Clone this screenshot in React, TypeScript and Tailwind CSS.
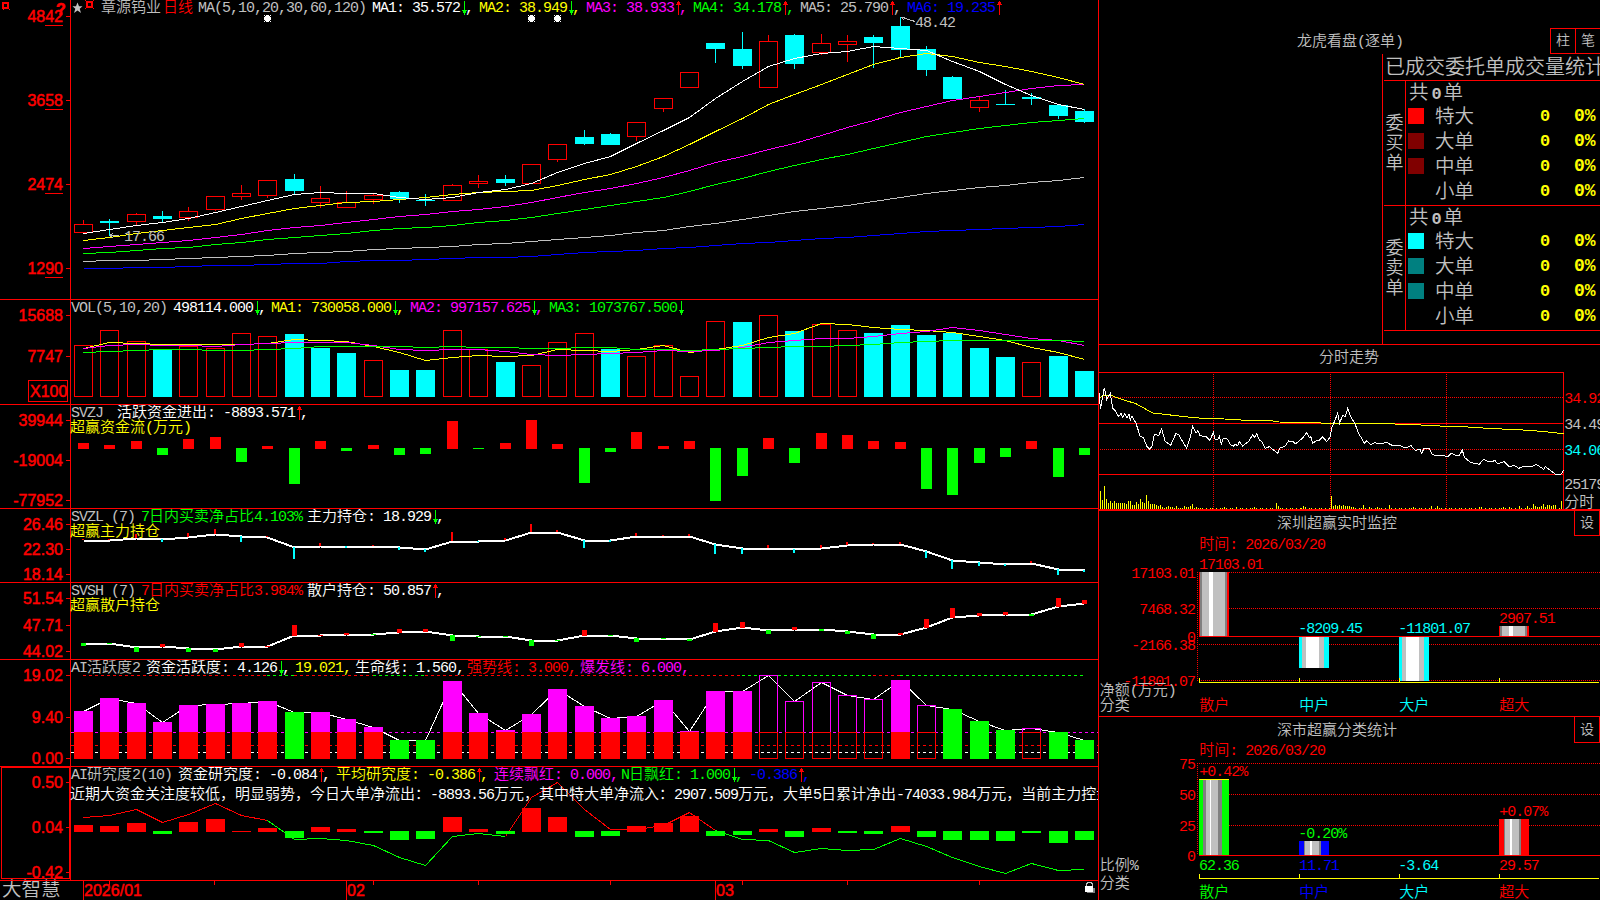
import type { ReactNode } from "react";

type Segment = {
  text: string;
  color: string;
  width?: string;
  arrow?: "up" | "down";
  tail?: string;
};

type AxisLabel = { text: string; y: number };

type PanelProps = {
  top: number;
  height: number;
  className: string;
  labels: AxisLabel[];
  header: Segment[];
  subtitle?: ReactNode;
  children: ReactNode;
};

const RED = "#ff0000";
const GREEN = "#00ff00";
const CYAN = "#00ffff";
const MAGENTA = "#ff00ff";
const YELLOW = "#ffff00";
const BLUE = "#0000ff";
const SILVER = "#c0c0c0";
const GRAY = "#808080";
const WHITE = "#ffffff";

const centerX = (i: number) => Math.round(83 + i * 26.345);

// color, high, body top, body bottom, low
const candles: [string, number, number, number, number][] = [
  ["r", 220, 224, 233, 233], ["c", 219, 221, 223, 236], ["r", 213, 214, 222, 225], ["c", 211, 216, 219, 222],
  ["r", 207, 211, 218, 221], ["r", 196, 196, 210, 211], ["r", 185, 193, 197, 200], ["r", 180, 180, 196, 198],
  ["c", 174, 179, 191, 194], ["r", 186, 198, 203, 208], ["r", 191, 202, 208, 208], ["r", 194, 195, 200, 204],
  ["c", 191, 192, 199, 203], ["c", 194, 200, 201, 206], ["r", 184, 185, 201, 201], ["r", 175, 181, 184, 188],
  ["c", 175, 179, 183, 186], ["r", 164, 164, 184, 184], ["r", 144, 144, 160, 162], ["c", 130, 137, 144, 145],
  ["c", 133, 134, 145, 145], ["r", 122, 122, 137, 141], ["r", 98, 98, 109, 112], ["r", 72, 72, 88, 88],
  ["c", 43, 43, 49, 63], ["c", 32, 49, 66, 69], ["r", 35, 41, 88, 88], ["c", 34, 35, 64, 69],
  ["r", 34, 43, 53, 55], ["r", 35, 41, 45, 62], ["c", 35, 37, 43, 68], ["c", 17, 26, 50, 57],
  ["c", 46, 49, 70, 76], ["c", 76, 77, 99, 99], ["r", 97, 100, 108, 112], ["c", 90, 104, 105, 105],
  ["c", 93, 97, 99, 105], ["c", 104, 105, 116, 119], ["c", 109, 111, 122, 123]
];

const priceLines = [
  { color: BLUE, ys: [268, 268, 267, 267, 266, 265, 265, 264, 263, 263, 261, 260, 260, 259, 258, 257, 257, 256, 254, 252, 251, 250, 248, 247, 245, 243, 242, 240, 238, 237, 235, 233, 231, 230, 229, 228, 227, 226, 224] },
  { color: SILVER, ys: [261, 260, 260, 259, 258, 257, 256, 255, 253, 252, 251, 249, 248, 247, 246, 244, 243, 241, 239, 237, 235, 232, 230, 226, 223, 219, 215, 211, 208, 205, 201, 197, 193, 190, 187, 185, 182, 180, 177] },
  { color: GREEN, ys: [253, 252, 250, 248, 247, 244, 242, 239, 237, 235, 233, 230, 228, 227, 225, 222, 220, 217, 213, 209, 205, 201, 197, 191, 184, 178, 171, 165, 159, 154, 148, 142, 136, 132, 128, 125, 122, 120, 118] },
  { color: MAGENTA, ys: [248, 246, 244, 242, 240, 237, 234, 230, 227, 225, 222, 219, 216, 214, 211, 209, 206, 202, 197, 192, 188, 183, 177, 170, 162, 156, 149, 143, 135, 127, 120, 112, 106, 100, 96, 92, 88, 85, 84] },
  { color: YELLOW, ys: [240, 237, 233, 230, 227, 224, 218, 213, 208, 205, 202, 201, 199, 197, 194, 192, 191, 190, 185, 179, 174, 166, 156, 144, 131, 118, 104, 94, 84, 74, 64, 57, 53, 56, 62, 66, 71, 77, 84] },
  { color: WHITE, ys: [233, 229, 225, 222, 218, 212, 206, 200, 194, 192, 193, 193, 197, 199, 197, 192, 189, 183, 172, 163, 156, 143, 130, 117, 98, 81, 66, 58, 53, 51, 46, 48, 50, 61, 71, 84, 95, 104, 109] }
];

const volumeTops = [345, 330, 341, 350, 346, 348, 333, 336, 334, 348, 353, 360, 370, 370, 330, 349, 362, 365, 342, 333, 349, 356, 345, 376, 321, 322, 315, 331, 324, 330, 333, 325, 335, 333, 348, 357, 362, 356, 371];
const volumeKinds = "rrrcrrrrcccrccrrcrrrcrrrrcrcrrccccccrcc";

const volumeLines = [
  { color: YELLOW, ys: [348, 342, 343, 344, 344, 344, 344, 343, 339, 340, 341, 346, 352, 360, 357, 355, 356, 355, 349, 350, 351, 349, 345, 352, 349, 345, 337, 333, 323, 324, 327, 329, 330, 332, 336, 340, 347, 352, 359] },
  { color: MAGENTA, ys: [348, 345, 344, 345, 345, 346, 344, 343, 342, 342, 342, 345, 349, 350, 349, 349, 351, 354, 355, 354, 353, 352, 350, 351, 350, 347, 342, 340, 338, 338, 336, 333, 331, 327, 330, 334, 338, 340, 345] },
  { color: GREEN, ys: [352, 351, 350, 349, 349, 350, 350, 349, 348, 346, 346, 346, 346, 347, 346, 347, 347, 348, 348, 347, 347, 349, 349, 350, 349, 348, 347, 346, 346, 345, 344, 342, 341, 340, 340, 340, 340, 340, 341] }
];

const flows = [6, 4, 8, -7, 10, 12, -14, 3, -36, 8, -3, 4, -7, -6, 28, -1, 6, 29, 5, -35, -4, 17, 3, 8, -53, -28, 11, -15, 16, 14, 8, 7, -41, -47, -15, -9, 8, -29, -7];

const mainLine = [540, 540, 538, 539, 537, 534, 536, 537, 547, 546, 546, 546, 547, 549, 541, 541, 540, 532, 532, 540, 540, 536, 536, 536, 544, 548, 548, 549, 548, 545, 544, 544, 551, 560, 562, 564, 563, 569, 570];
const mainTicks = [1, 1, 4, -3, 4, 5, -6, 1, -12, 3, -2, 1, -3, -3, 9, -1, 2, 8, 2, -8, -2, 3, 1, 2, -10, -6, 3, -4, 3, 3, 1, 2, -7, -9, -4, -2, 2, -6, -2];

const retailLine = [643, 643, 647, 646, 648, 649, 646, 646, 635, 635, 634, 634, 632, 631, 635, 636, 636, 640, 640, 635, 635, 638, 638, 639, 631, 627, 630, 629, 629, 631, 634, 634, 627, 617, 615, 614, 614, 606, 603];
const retailTicks = [-3, -1, -5, 3, -4, -3, 4, 1, 11, 1, 2, -1, 4, 3, -6, -1, -1, -6, -1, 6, -1, -4, -1, -2, 9, 6, -4, 3, -2, -3, -5, 2, 9, 10, 3, 3, -2, 9, 4];

// s = stacked, g = green, h = hollow
const activeTops = [711, 698, 703, 722, 705, 704, 703, 701, 712, 712, 719, 727, 740, 740, 681, 713, 730, 714, 689, 706, 718, 716, 700, 731, 691, 691, 675, 701, 682, 695, 699, 680, 705, 709, 721, 730, 728, 732, 740];
const activeKinds = "ssssssssgsssggsssssssssssshhhhhshggghgg";

const researchBars = [7, 6, 9, -3, 10, 13, 1, 4, -7, 5, 3, -2, -9, -8, 15, 3, -3, 24, 15, -6, -5, 6, 9, 16, -5, -4, 3, -6, 4, -2, -3, 6, -6, -9, -9, -10, -2, -12, -9];
const researchLine = [817, 815, 809, 822, 814, 803, 815, 820, 839, 838, 840, 845, 857, 865, 836, 833, 836, 797, 782, 809, 829, 829, 825, 812, 830, 839, 840, 852, 848, 850, 849, 838, 846, 857, 866, 873, 863, 870, 869];

const toPoints = (ys: number[], from = 0, to = ys.length - 1) =>
  ys
    .slice(from, to + 1)
    .map((y, i) => `${centerX(from + i) + 0.5},${y + 0.5}`)
    .join(" ");

function splitRuns(text: string) {
  return text.match(/[\x20-\x7e]+|[^\x20-\x7e]+/g) ?? [];
}

function Mixed({ text }: { text: string }) {
  return (
    <>
      {splitRuns(text).map((run, i) => (
        <span key={i} className={run.charCodeAt(0) < 127 ? "tracking-[-1px]" : ""}>
          {run}
        </span>
      ))}
    </>
  );
}

function Arrow({ dir }: { dir: "up" | "down" }) {
  return (
    <svg className="w-[7px] shrink-0" height="15" viewBox="0 0 7 15" shapeRendering="crispEdges">
      {dir === "up" ? (
        <path d="M3 0h1v14H3zM2 1h3v2H2zM1 3h5v1H1z" fill={RED} />
      ) : (
        <path d="M3 0h1v14H3zM1 9h5v1H1zM2 10h3v2H2z" fill={GREEN} />
      )}
    </svg>
  );
}

function HeaderRow({ items }: { items: Segment[] }) {
  return (
    <div className="flex h-4 items-center whitespace-pre pl-[71px] leading-4">
      {items.map((item, i) => (
        <div key={i} className={`flex shrink-0 items-center ${item.width ?? ""} ${item.color}`}>
          <span>
            <Mixed text={item.text} />
          </span>
          {item.arrow ? (
            <span className="-mt-[2px] ml-px">
              <Arrow dir={item.arrow} />
            </span>
          ) : null}
          {item.tail ? <span className="-ml-[3px] tracking-[-1px]">{item.tail}</span> : null}
        </div>
      ))}
    </div>
  );
}

function Panel({ top, height, className, labels, header, subtitle, children }: PanelProps) {
  return (
    <section className={`relative shrink-0 overflow-hidden border-b border-[#ff0000] ${className}`}>
      <svg
        className="absolute inset-0"
        width="1098"
        height={height}
        viewBox={`0 ${top} 1098 ${height}`}
        shapeRendering="crispEdges"
      >
        <rect x="70" y={top} width="1" height={height} fill={RED} />
        {labels.map((label) => (
          <g key={label.text} fill={RED}>
            <text x="63" y={label.y + 6} textAnchor="end" fontSize="16" fontFamily="Liberation Sans, sans-serif" stroke={RED} strokeWidth="0.5">
              {label.text}
            </text>
            <rect x="66" y={label.y} width="4" height="1" />
          </g>
        ))}
        {children}
      </svg>
      <div className="relative pt-px">
        <HeaderRow items={header} />
        {subtitle}
      </div>
    </section>
  );
}

function Lines({ lines }: { lines: { color: string; ys: number[] }[] }) {
  return (
    <>
      {lines.map((line) => (
        <polyline key={line.color} points={toPoints(line.ys)} fill="none" stroke={line.color} />
      ))}
    </>
  );
}

function SunMark({ x, y, color }: { x: number; y: number; color: string }) {
  return (
    <path
      d={`M${x - 2} ${y - 2}h5v5h-5zM${x - 3} ${y - 3}h1v1h-1zM${x + 3} ${y - 3}h1v1h-1zM${x - 3} ${y + 3}h1v1h-1zM${x + 3} ${y + 3}h1v1h-1zM${x - 3} ${y - 1}h7v3h-7zM${x - 1} ${y - 3}h3v7h-3z`}
      fill={color}
    />
  );
}

function PricePanel() {
  const labels = [
    { text: "4842", y: 16 },
    { text: "3658", y: 100 },
    { text: "2474", y: 184 },
    { text: "1290", y: 268 }
  ];
  return (
    <Panel
      top={0}
      height={299}
      className="h-[300px]"
      labels={labels}
      header={[
        { text: "", color: "", width: "w-[30px]" },
        { text: "章源钨业", color: "text-[#c0c0c0]", width: "w-[62px]" },
        { text: "日线", color: "text-[#ff0000]", width: "w-[35px]" },
        { text: "MA(5,10,20,30,60,120)", color: "text-[#c0c0c0]", width: "w-[174px]" },
        { text: "MA1: 35.572", color: "text-white", width: "w-[107px]", arrow: "down", tail: "," },
        { text: "MA2: 38.949", color: "text-[#ffff00]", width: "w-[107px]", arrow: "down", tail: "," },
        { text: "MA3: 38.933", color: "text-[#ff00ff]", width: "w-[107px]", arrow: "up", tail: "," },
        { text: "MA4: 34.178", color: "text-[#00ff00]", width: "w-[107px]", arrow: "up", tail: "," },
        { text: "MA5: 25.790", color: "text-[#c0c0c0]", width: "w-[107px]", arrow: "up", tail: "," },
        { text: "MA6: 19.235", color: "text-[#0000ff]", arrow: "up" }
      ]}
    >
      {labels.map((label) => (
        <rect key={label.text} x="45" y={label.y + 9} width="18" height="1" fill={RED} />
      ))}
      <path d="M2 2h7v7H2zM4 4v3h3V4zM9 9h1v1H9zM3 9h1v1H3z" fill={RED} fillRule="evenodd" />
      <text x="56" y="15" fontSize="16" fontWeight="900" fontFamily="Liberation Sans, sans-serif" fill={RED} stroke={RED} strokeWidth="0.6">
        ?
      </text>
      <path
        d="M77.500 2.500 79 6.300H82.500L79.700 8.800 81 13 77.500 10.600 74 13 75.300 8.800 72.500 6.300H76Z"
        fill={SILVER}
        shapeRendering="geometricPrecision"
      />
      <path d="M86 1h7v7h-7zM88 3v3h3V3zM85 0h1v1h-1zM93 0h1v1h-1zM85 8h1v1h-1zM93 8h1v1h-1z" fill={RED} fillRule="evenodd" />
      {[7, 17, 18].map((i) => (
        <SunMark key={i} x={centerX(i)} y={18} color={WHITE} />
      ))}
      {candles.map(([kind, high, bodyTop, bodyBottom, low], i) => {
        const x = centerX(i);
        if (kind === "c") {
          return (
            <g key={i} fill={CYAN}>
              <rect x={x} y={high} width="1" height={low - high} />
              <rect x={x - 9} y={bodyTop} width="19" height={bodyBottom - bodyTop} />
            </g>
          );
        }
        return (
          <g key={i}>
            <rect x={x} y={high} width="1" height={bodyTop - high} fill={RED} />
            <rect x={x} y={bodyBottom} width="1" height={low - bodyBottom} fill={RED} />
            <rect x={x - 8.5} y={bodyTop + 0.5} width="18" height={Math.max(bodyBottom - bodyTop - 1, 1)} fill="none" stroke={RED} />
          </g>
        );
      })}
      <Lines lines={priceLines} />
      <path d="M110 235.500h9M110 235.500l3-2.500M110 235.500l3 2.500M901 17l14 4.500M901 17l3 3M901 17h4" stroke={SILVER} fill="none" />
      <text x="124" y="241" fontSize="15" letterSpacing="-1" fill={SILVER}>17.66</text>
      <text x="915" y="27" fontSize="15" letterSpacing="-1" fill={SILVER}>48.42</text>
    </Panel>
  );
}

function VolumePanel() {
  return (
    <Panel
      top={300}
      height={104}
      className="h-[105px]"
      labels={[{ text: "15688", y: 315 }, { text: "7747", y: 356 }]}
      header={[
        { text: "VOL(5,10,20)", color: "text-[#c0c0c0]", width: "w-[102px]" },
        { text: "498114.000", color: "text-white", width: "w-[98px]", arrow: "down", tail: "," },
        { text: "MA1: 730058.000", color: "text-[#ffff00]", width: "w-[139px]", arrow: "down", tail: "," },
        { text: "MA2: 997157.625", color: "text-[#ff00ff]", width: "w-[139px]", arrow: "down", tail: "," },
        { text: "MA3: 1073767.500", color: "text-[#00ff00]", arrow: "down" }
      ]}
    >
      <rect x="28.500" y="380.500" width="39" height="21" fill="none" stroke={RED} />
      <text x="30" y="397" fontSize="16" fontFamily="Liberation Sans, sans-serif" fill={RED} stroke={RED} strokeWidth="0.5">
        X100
      </text>
      {volumeTops.map((y, i) =>
        volumeKinds[i] === "c" ? (
          <rect key={i} x={centerX(i) - 9} y={y} width="19" height={397 - y} fill={CYAN} />
        ) : (
          <rect key={i} x={centerX(i) - 8.5} y={y + 0.5} width="18" height={396 - y} fill="none" stroke={RED} />
        )
      )}
      <Lines lines={volumeLines} />
    </Panel>
  );
}

function FlowPanel() {
  return (
    <Panel
      top={405}
      height={103}
      className="h-[104px]"
      labels={[{ text: "39944", y: 420 }, { text: "-19004", y: 460 }, { text: "-77952", y: 500 }]}
      header={[
        { text: "SVZJ", color: "text-[#c0c0c0]", width: "w-[46px]" },
        { text: "活跃资金进出: -8893.571", color: "text-white", arrow: "up", tail: "," }
      ]}
      subtitle={<p className="-mt-px pl-[70px] leading-[15px] text-[#ffff00]"><Mixed text="超赢资金流(万元)" /></p>}
    >
      {flows.map((v, i) => (
        <rect
          key={i}
          x={centerX(i) - 5}
          y={v > 0 ? 449 - v : 448}
          width="11"
          height={Math.abs(v)}
          fill={v > 0 ? RED : GREEN}
        />
      ))}
    </Panel>
  );
}

function MainHoldingPanel() {
  return (
    <Panel
      top={509}
      height={73}
      className="h-[74px]"
      labels={[{ text: "26.46", y: 524 }, { text: "22.30", y: 549 }, { text: "18.14", y: 574 }]}
      header={[
        { text: "SVZL (7)", color: "text-[#c0c0c0]", width: "w-[70px]" },
        { text: "7日内买卖净占比4.103%", color: "text-[#00ff00]", width: "w-[166px]" },
        { text: "主力持仓: 18.929", color: "text-white", arrow: "down", tail: "," }
      ]}
      subtitle={<p className="-mt-px pl-[70px] leading-[15px] text-[#ffff00]">超赢主力持仓</p>}
    >
      <polyline points={toPoints(mainLine)} fill="none" stroke={WHITE} strokeWidth="2" />
      {mainTicks.map((v, i) => (
        <rect
          key={i}
          x={centerX(i) - 1}
          y={v > 0 ? mainLine[i] - v : mainLine[i]}
          width="2"
          height={Math.abs(v)}
          fill={v > 0 ? RED : CYAN}
        />
      ))}
    </Panel>
  );
}

function RetailHoldingPanel() {
  return (
    <Panel
      top={583}
      height={76}
      className="h-[77px]"
      labels={[{ text: "51.54", y: 598 }, { text: "47.71", y: 625 }, { text: "44.02", y: 651 }]}
      header={[
        { text: "SVSH (7)", color: "text-[#c0c0c0]", width: "w-[70px]" },
        { text: "7日内买卖净占比3.984%", color: "text-[#ff0000]", width: "w-[166px]" },
        { text: "散户持仓: 50.857", color: "text-white", arrow: "up", tail: "," }
      ]}
      subtitle={<p className="-mt-px pl-[70px] leading-[15px] text-[#ffff00]">超赢散户持仓</p>}
    >
      <polyline points={toPoints(retailLine)} fill="none" stroke={WHITE} strokeWidth="2" />
      {retailTicks.map((v, i) => (
        <rect
          key={i}
          x={centerX(i) - 2}
          y={v > 0 ? retailLine[i] + 1 - v : retailLine[i]}
          width="5"
          height={Math.abs(v)}
          fill={v > 0 ? RED : GREEN}
        />
      ))}
    </Panel>
  );
}

function ActivityPanel() {
  const limits: [number, number, string][] = [
    [0, 7, RED], [7, 8, GREEN], [8, 11, RED], [11, 13, GREEN], [13, 25, RED], [25, 30, GREEN], [30, 31, RED], [31, 38, GREEN]
  ];
  return (
    <Panel
      top={660}
      height={106}
      className="h-[107px]"
      labels={[{ text: "19.02", y: 675 }, { text: "9.40", y: 717 }, { text: "0.00", y: 758 }]}
      header={[
        { text: "AI活跃度2", color: "text-[#c0c0c0]", width: "w-[75px]" },
        { text: "资金活跃度: 4.126", color: "text-white", width: "w-[149px]", arrow: "down", tail: "," },
        { text: "19.021,", color: "text-[#ffff00]", width: "w-[60px]" },
        { text: "生命线: 1.560,", color: "text-white", width: "w-[112px]" },
        { text: "强势线: 3.000,", color: "text-[#ff0000]", width: "w-[113px]" },
        { text: "爆发线: 6.000,", color: "text-[#ff00ff]" }
      ]}
    >
      {limits.map(([from, to, color]) => (
        <path key={from} d={`M${centerX(from)} 675.500H${centerX(to)}`} stroke={color} strokeDasharray="3 3" />
      ))}
      <path d="M71 732.500H1098" stroke={MAGENTA} strokeDasharray="3 3" />
      <path d="M71 745.500H1098" stroke={RED} strokeDasharray="3 3" />
      <path d="M71 752.500H1098" stroke={WHITE} strokeDasharray="3 3" />
      <polyline points={toPoints(activeTops)} fill="none" stroke={WHITE} />
      {activeTops.map((y, i) => {
        const x = centerX(i) - 9;
        const kind = activeKinds[i];
        if (kind === "g") {
          return <rect key={i} x={x} y={y} width="19" height={759 - y} fill={GREEN} />;
        }
        if (kind === "h") {
          return (
            <g key={i} fill="none">
              <rect x={x + 0.5} y={y + 0.5} width="18" height={732 - y} stroke={MAGENTA} />
              <rect x={x + 0.5} y="732.500" width="18" height="26" stroke={RED} />
            </g>
          );
        }
        return (
          <g key={i}>
            <rect x={x} y={y} width="19" height={732 - y} fill={MAGENTA} />
            <rect x={x} y="732" width="19" height="27" fill={RED} />
          </g>
        );
      })}
    </Panel>
  );
}

function ResearchPanel() {
  return (
    <Panel
      top={767}
      height={113}
      className="h-[114px]"
      labels={[{ text: "0.50", y: 782 }, { text: "0.04", y: 827 }, { text: "-0.42", y: 872 }]}
      header={[
        { text: "AI研究度2(10)", color: "text-[#c0c0c0]", width: "w-[107px]" },
        { text: "资金研究度: -0.084", color: "text-white", width: "w-[158px]", arrow: "up", tail: "," },
        { text: "平均研究度: -0.386", color: "text-[#ffff00]", width: "w-[158px]", arrow: "up", tail: "," },
        { text: "连续飘红: 0.000,", color: "text-[#ff00ff]", width: "w-[127px]" },
        { text: "N日飘红: 1.000", color: "text-[#00ff00]", width: "w-[128px]", arrow: "down", tail: "," },
        { text: "-0.386", color: "text-[#0000ff]", arrow: "up", tail: "," }
      ]}
      subtitle={
        <p className="mt-[4px] whitespace-nowrap pl-[70px] leading-4 text-white">
          <Mixed text="近期大资金关注度较低，明显弱势，今日大单净流出：-8893.56万元，其中特大单净流入：2907.509万元，大单5日累计净出-74033.984万元，当前主力控盘" />
        </p>
      }
    >
      <rect x="1.500" y="767.500" width="68" height="111" fill="none" stroke={RED} />
      <polyline points={toPoints(researchLine, 0, 7)} fill="none" stroke={RED} />
      <polyline points={toPoints(researchLine, 7, 16)} fill="none" stroke={GREEN} />
      <polyline points={toPoints(researchLine, 16, 24)} fill="none" stroke={RED} />
      <polyline points={toPoints(researchLine, 24)} fill="none" stroke={GREEN} />
      {researchBars.map((v, i) => (
        <rect
          key={i}
          x={centerX(i) - 9}
          y={v > 0 ? 832 - v : 831}
          width="19"
          height={Math.abs(v)}
          fill={v > 0 ? RED : GREEN}
        />
      ))}
    </Panel>
  );
}

function TimeAxis() {
  return (
    <footer className="flex h-[19px] items-center">
      <span className="w-[70px] pl-[2px] pt-px text-[19.500px] leading-[18px] text-[#c0c0c0]">大智慧</span>
      <svg width="1028" height="19" viewBox="70 881 1028 19" shapeRendering="crispEdges">
        {[83, 346, 715].map((x) => (
          <rect key={x} x={x} y="881" width="1" height="19" fill={RED} />
        ))}
        {[109, 214, 373, 478, 610, 742, 847, 979].map((x) => (
          <rect key={x} x={x} y="881" width="1" height="4" fill={RED} />
        ))}
        <g fontSize="16" fontFamily="Liberation Sans, sans-serif" fill={RED} stroke={RED} strokeWidth="0.5">
          <text x="84" y="896" textLength="58">2026/01</text>
          <text x="347" y="896">02</text>
          <text x="716" y="896">03</text>
        </g>
        <path d="M1086.500 886v-2.500h1v-1h4v1h1v2.500" fill="none" stroke={SILVER} />
        <rect x="1087" y="888" width="8" height="5" fill={GRAY} />
        <rect x="1085" y="886" width="8" height="6" fill={WHITE} />
      </svg>
    </footer>
  );
}

type OrderGroupProps = { side: string[]; swatches: string[]; className: string };

function OrderGroup({ side, swatches, className }: OrderGroupProps) {
  const names = ["特大", "大单", "中单", "小单"];
  return (
    <div className={`ml-px flex border-b border-[#ff0000] ${className}`}>
      <div className="flex w-[22px] flex-col items-center justify-center border-r border-[#ff0000] pt-px text-[18px] leading-5">
        {side.map((char) => (
          <span key={char}>{char}</span>
        ))}
      </div>
      <div className="flex-1 text-[19.500px]">
        <div className="flex h-[23px] items-center pl-[3px] pt-[3px] leading-[21px]">
          共<span className="w-[15px] pl-[3px] text-[17px] font-bold">0</span>单
        </div>
        {names.map((name, i) => (
          <div key={name} className="flex h-[25px] items-center leading-[23px]">
            <span className={`-mt-px ml-[2px] size-4 ${swatches[i]}`} />
            <span className="ml-[11px] w-[104px] pt-[3px]">{name}</span>
            <span className="w-[35px] pl-px text-[17px] font-bold text-[#ffff00]">0</span>
            <span className="text-[18px] font-bold text-[#ffff00]">0%</span>
          </div>
        ))}
      </div>
    </div>
  );
}

function OrderStats() {
  return (
    <section className="relative h-[345px] border-b border-[#ff0000] text-[#c0c0c0]">
      <div className="flex h-[54px] items-start justify-between pt-7">
        <h2 className="ml-[198px] mt-[7px] leading-4">
          <Mixed text="龙虎看盘(逐单)" />
        </h2>
        <div className="flex h-[26px] w-[50px] border-y border-l border-[#ff0000] text-[14px] leading-6">
          <span className="w-[25px] border-r border-[#ff0000] text-center">柱</span>
          <span className="flex-1 text-center">笔</span>
        </div>
      </div>
      <div className="ml-[283px] h-[290px] border-l border-[#ff0000]">
        <h3 className="ml-px h-[27px] whitespace-nowrap border-b border-[#ff0000] pl-px pt-[4px] text-[20px] leading-[22px]">
          已成交委托单成交量统计
        </h3>
        <OrderGroup side={["委", "买", "单"]} swatches={["bg-[#ff0000]", "bg-[#800000]", "bg-[#800000]", ""]} className="h-[125px]" />
        <OrderGroup side={["委", "卖", "单"]} swatches={["bg-[#00ffff]", "bg-[#008080]", "bg-[#008080]", ""]} className="h-[125px]" />
      </div>
    </section>
  );
}

type LabelProps = { x: number; y: number; color: string; children: string; end?: boolean };

// The right-hand charts use a grid of three units per pixel.
function Label({ x, y, color, children, end }: LabelProps) {
  return (
    <text x={x} y={y + 15} fill={color} fontSize="45" textAnchor={end ? "end" : "start"} xmlSpace="preserve">
      {splitRuns(children).map((run, i) => (
        <tspan key={i} letterSpacing={run.charCodeAt(0) < 127 ? -3.1 : 0}>
          {run}
        </tspan>
      ))}
    </text>
  );
}

const avgPoints = "9,160 12,172 22,167 45,166 60,172 100,185 120,191 150,208 172,219 215,224 265,230 320,235 385,237 450,241 525,242 550,246 650,248 700,250 870,251 975,255 1050,259 1115,261 1175,265 1240,268 1300,271 1355,276 1403,281";
const tickPoints = "10,160 13,208 25,143 32,178 43,160 50,205 58,213 68,230 75,220 80,232 86,222 93,233 99,222 103,240 108,228 120,250 133,290 142,292 152,318 162,328 168,318 175,282 188,287 197,266 207,303 224,316 240,280 248,284 260,305 272,325 282,295 290,259 300,280 306,272 312,287 330,290 342,301 352,277 358,300 366,298 370,289 376,312 382,295 394,297 402,313 412,319 418,313 425,317 430,305 440,318 450,310 458,305 470,284 476,292 482,280 490,300 498,305 508,325 520,320 530,328 545,340 552,323 566,320 578,303 590,304 598,312 610,302 620,294 632,278 640,293 645,290 650,310 660,303 670,301 680,290 692,305 702,292 708,262 715,245 725,220 731,249 740,226 748,230 755,206 765,232 775,247 788,280 805,309 812,302 825,314 835,308 850,312 872,307 888,316 910,315 928,324 945,317 958,331 972,328 977,340 984,325 1000,326 1008,343 1025,348 1040,346 1055,351 1066,340 1078,345 1090,347 1099,330 1105,352 1125,368 1150,373 1162,358 1180,366 1197,362 1205,371 1225,365 1240,381 1255,376 1268,385 1280,380 1305,381 1320,373 1333,381 1343,388 1348,380 1360,389 1378,402 1395,403 1403,391";

const openVolumes = [54, 27, 69, 30, 18, 24, 18, 24, 18, 18, 18, 18, 18, 15, 24, 24, 12, 12, 21, 15, 30, 21, 18, 42, 24, 15, 15, 15, 12, 9, 12, 6, 3, 6, 9, 6, 6, 3, 9, 3, 3, 3, 9, 6, 6, 9, 15, 3, 6, 3, 3];
const spikes: Record<number, number> = {
  53: 3, 62: 6, 68: 6, 77: 6, 88: 18, 89: 9, 102: 9, 103: 6, 115: 3, 116: 39, 117: 9, 118: 12, 119: 9, 120: 12, 121: 9, 122: 12,
  123: 9, 124: 9, 125: 9, 126: 6, 127: 6, 132: 12, 135: 6, 139: 6, 145: 12, 157: 6, 166: 9, 169: 9, 190: 6, 191: 6,
  202: 6, 205: 6, 210: 9, 214: 9, 217: 15, 218: 9, 219: 6, 220: 6, 221: 9, 222: 15, 223: 6, 224: 12, 225: 12, 226: 9, 227: 12, 228: 12, 231: 24
};

function IntradayPanel() {
  const volumes = Array.from({ length: 232 }, (_, i) => openVolumes[i] ?? spikes[i] ?? ((i * 7) % 5 < 3 ? 3 : 0));
  return (
    <section className="relative h-[165px]">
      <svg className="absolute inset-0" width="501" height="165" viewBox="9 15 1503 495" shapeRendering="crispEdges">
        <g stroke={RED} strokeWidth="3" fill="none">
          <path d="M9 97.500H1402.500V510M9 250.500H1402M9 403.500H1402" />
          <path d="M9 510H1512" strokeWidth="6" />
          <path d="M12 172.500H1402M12 328.500H1402M352.500 102V506M703.500 102V506M1051.500 102V506" strokeDasharray="3 3" />
        </g>
        {volumes.map((h, i) => (
          <rect key={i} x={Math.min(12 + i * 5.985, 1400)} y={507 - h} width="3" height={h} fill={YELLOW} />
        ))}
        <polyline points={avgPoints} fill="none" stroke={YELLOW} strokeWidth="3" />
        <polyline points={tickPoints} fill="none" stroke={WHITE} strokeWidth="3" />
        <Label x={1405} y={175} color={RED}>34.92</Label>
        <Label x={1405} y={253} color={SILVER}>34.49</Label>
        <Label x={1405} y={331} color={CYAN}>34.06</Label>
        <Label x={1405} y={433} color={SILVER}>25179</Label>
        <Label x={1405} y={486} color={SILVER}>分时</Label>
      </svg>
      <h2 className="relative pl-[220px] pt-[6px] leading-4 text-[#c0c0c0]">分时走势</h2>
    </section>
  );
}

type Stripe = [number, number, string];

function Cylinder({ x, top, bottom, stripes }: { x: number; top: number; bottom: number; stripes: Stripe[] }) {
  return (
    <>
      {stripes.map(([from, to, fill]) => (
        <rect key={from} x={x + from} y={top} width={to - from} height={bottom - top} fill={fill} />
      ))}
    </>
  );
}

const gainStripes: Stripe[] = [[0, 3, RED], [3, 9, GRAY], [9, 30, SILVER], [30, 42, WHITE], [42, 78, SILVER], [78, 84, GRAY], [84, 90, RED]];
const lossStripes: Stripe[] = [[0, 9, CYAN], [9, 21, SILVER], [21, 60, WHITE], [60, 75, SILVER], [75, 90, CYAN]];
const wideStripes: Stripe[] = [[0, 12, GREEN], [12, 21, GRAY], [21, 33, SILVER], [33, 36, WHITE], [36, 57, SILVER], [57, 69, GRAY], [69, 90, GREEN]];
const edgeStripes = (color: string): Stripe[] => [[0, 15, color], [15, 18, GRAY], [18, 33, SILVER], [33, 39, WHITE], [39, 60, SILVER], [60, 66, GRAY], [66, 90, color]];

function TitleBar({ children }: { children: string }) {
  return (
    <div className="relative flex items-start justify-between text-[#c0c0c0]">
      <h2 className="ml-[178px] mt-[7px] leading-4">{children}</h2>
      <span className="h-[26px] w-[26px] border-b border-l border-r border-[#ff0000] text-center text-[14px] leading-[26px]">设</span>
    </div>
  );
}

function NetPanel() {
  return (
    <section className="relative h-[207px] border-b border-[#ff0000]">
      <svg className="absolute inset-0" width="501" height="206" viewBox="9 0 1503 618" shapeRendering="crispEdges">
        <g stroke={RED} strokeWidth="3">
          <path d="M310 187.500H1512M310 295.500H1512M310 403.500H1512M310 511.500H1512M304.500 187V514" strokeDasharray="3 3" />
          <path d="M309 379.500H1512M9 1.500H1512" />
        </g>
        <Cylinder x={309} top={186} bottom={378} stripes={gainStripes} />
        <Cylinder x={609} top={381} bottom={474} stripes={lossStripes} />
        <Cylinder x={909} top={381} bottom={513} stripes={lossStripes} />
        <Cylinder x={1209} top={348} bottom={378} stripes={gainStripes} />
        <path d="M310.500 504V517.500H1509M610.500 504V516M910.500 504V516M1210.500 504V516" fill="none" stroke={YELLOW} strokeWidth="3" />
        <Label x={310} y={103} color={RED}>时间: 2026/03/20</Label>
        <Label x={309} y={163} color={RED}>17103.01</Label>
        <Label x={607} y={355} color={CYAN}>-8209.45</Label>
        <Label x={907} y={355} color={CYAN}>-11801.07</Label>
        <Label x={1209} y={325} color={RED}>2907.51</Label>
        <Label x={297} y={190} color={RED} end>17103.01</Label>
        <Label x={297} y={298} color={RED} end>7468.32</Label>
        <Label x={297} y={380} color={RED} end>0</Label>
        <Label x={297} y={406} color={RED} end>-2166.38</Label>
        <Label x={297} y={514} color={RED} end>-11801.07</Label>
        <Label x={11} y={539} color={SILVER}>净额(万元)</Label>
        <Label x={11} y={586} color={SILVER}>分类</Label>
        <Label x={310} y={586} color={RED}>散户</Label>
        <Label x={610} y={586} color={CYAN}>中户</Label>
        <Label x={910} y={586} color={CYAN}>大户</Label>
        <Label x={1210} y={586} color={RED}>超大</Label>
      </svg>
      <TitleBar>深圳超赢实时监控</TitleBar>
    </section>
  );
}

function ClassPanel() {
  return (
    <section className="relative h-[183px] overflow-hidden">
      <svg className="absolute inset-0" width="501" height="183" viewBox="9 21 1503 549" shapeRendering="crispEdges">
        <g stroke={RED} strokeWidth="3">
          <path d="M310 160.500H1512M310 253.500H1512M310 346.500H1512M304.500 160V436" strokeDasharray="3 3" />
          <path d="M309 436.500H1512" />
        </g>
        <Cylinder x={309} top={210} bottom={435} stripes={wideStripes} />
        <rect x="309" y="207" width="90" height="3" fill={YELLOW} />
        <Cylinder x={609} top={393} bottom={435} stripes={edgeStripes(BLUE)} />
        <Cylinder x={1209} top={327} bottom={435} stripes={edgeStripes(RED)} />
        <path d="M310.500 492V505.500H1509M610.500 492V504M910.500 492V504M1210.500 492V504" fill="none" stroke={YELLOW} strokeWidth="3" />
        <Label x={310} y={120} color={RED}>时间: 2026/03/20</Label>
        <Label x={297} y={163} color={RED} end>75</Label>
        <Label x={297} y={256} color={RED} end>50</Label>
        <Label x={297} y={349} color={RED} end>25</Label>
        <Label x={297} y={439} color={RED} end>0</Label>
        <Label x={310} y={184} color={RED}>+0.42%</Label>
        <Label x={607} y={370} color={GREEN}>-0.20%</Label>
        <Label x={1210} y={304} color={RED}>+0.07%</Label>
        <Label x={309} y={466} color={GREEN}>62.36</Label>
        <Label x={609} y={466} color={BLUE}>11.71</Label>
        <Label x={907} y={466} color={CYAN}>-3.64</Label>
        <Label x={1209} y={466} color={RED}>29.57</Label>
        <Label x={11} y={464} color={SILVER}>比例%</Label>
        <Label x={11} y={518} color={SILVER}>分类</Label>
        <Label x={310} y={545} color={GREEN}>散户</Label>
        <Label x={610} y={545} color={BLUE}>中户</Label>
        <Label x={910} y={545} color={CYAN}>大户</Label>
        <Label x={1210} y={545} color={RED}>超大</Label>
      </svg>
      <TitleBar>深市超赢分类统计</TitleBar>
    </section>
  );
}

export default function App() {
  return (
    <main className="flex h-[900px] w-[1600px] overflow-hidden bg-black font-['Liberation_Mono','Noto_Sans_CJK_SC',monospace] text-[15px] font-[350]">
      <div className="flex w-[1099px] shrink-0 flex-col overflow-hidden border-r border-[#ff0000]">
        <PricePanel />
        <VolumePanel />
        <FlowPanel />
        <MainHoldingPanel />
        <RetailHoldingPanel />
        <ActivityPanel />
        <ResearchPanel />
        <TimeAxis />
      </div>
      <aside className="flex w-[501px] flex-col overflow-hidden">
        <OrderStats />
        <IntradayPanel />
        <NetPanel />
        <ClassPanel />
      </aside>
    </main>
  );
}
